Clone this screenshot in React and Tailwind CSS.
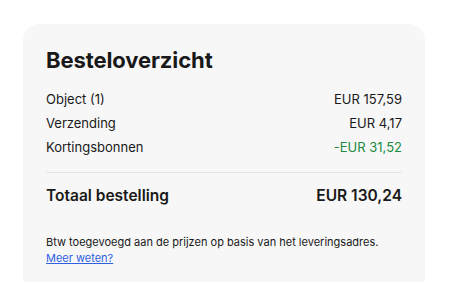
import React from 'react';

const rows = [
  { label: 'Object (1)', value: 'EUR 157,59' },
  { label: 'Verzending', value: 'EUR 4,17' },
  { label: 'Kortingsbonnen', value: '-EUR 31,52', green: true },
];

export default function App() {
  return (
    <div className="min-h-screen bg-white pt-6 pl-[23px] font-['Inter',sans-serif] text-[#191919]">
      <div className="w-[402px] h-[258px] overflow-hidden rounded-t-2xl bg-[#f7f7f7] px-[23px] pt-[22px]">
        <h2 className="text-[22px] leading-7 font-bold tracking-[-0.1px]">Besteloverzicht</h2>

        <div className="mt-[13px]">
          {rows.map((r) => (
            <div key={r.label} className="flex justify-between text-[13px] leading-6">
              <span>{r.label}</span>
              <span className={r.green ? 'text-[#208a43]' : ''}>{r.value}</span>
            </div>
          ))}
        </div>

        <div className="mt-[13px] border-t border-[#e5e5e5]" />

        <div className="mt-[11px] flex justify-between text-[15.5px] leading-6 font-semibold">
          <span>Totaal bestelling</span>
          <span>EUR 130,24</span>
        </div>

        <p className="mt-[26px] text-[11px] leading-4">
          Btw toegevoegd aan de prijzen op basis van het leveringsadres.
          <br />
          <a href="#" className="text-[#3060e0] underline">Meer weten?</a>
        </p>
      </div>
    </div>
  );
}
